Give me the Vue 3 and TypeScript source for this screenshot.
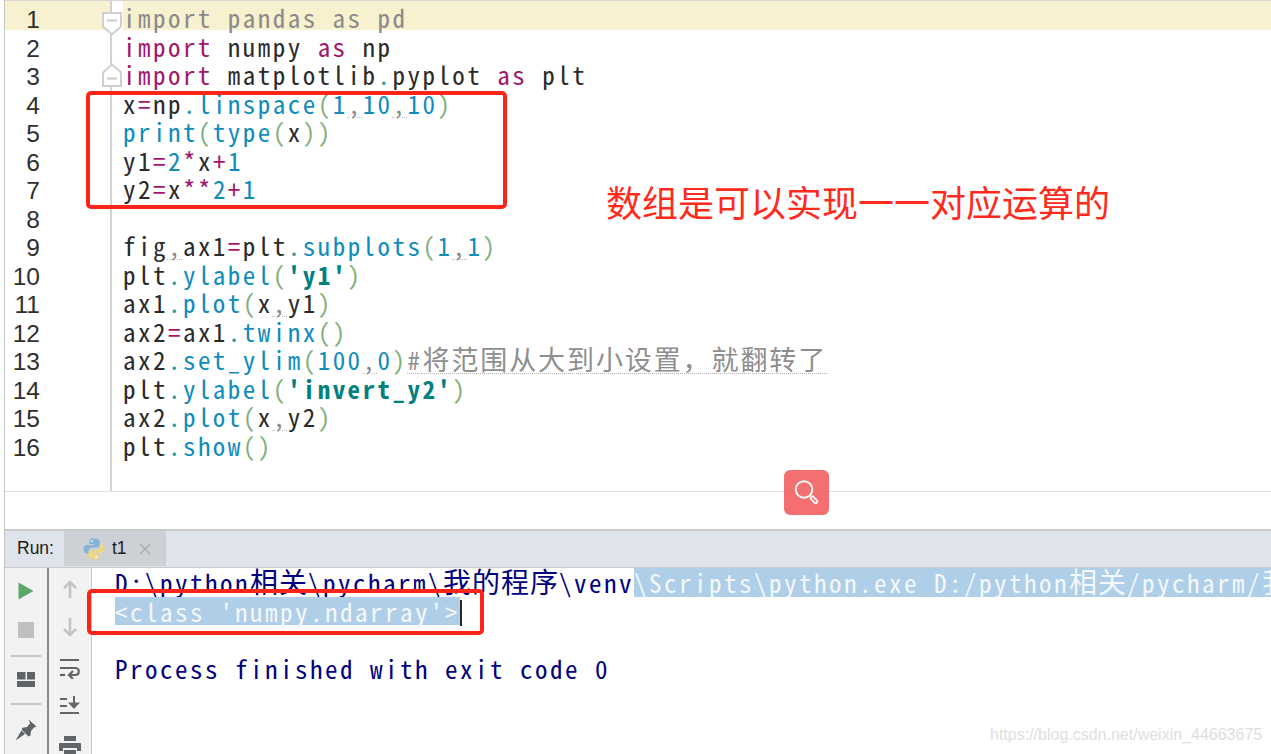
<script setup lang="ts">
type Tok = [string, string];
const p = (c: string): Tok => ['pa', c];
const lines: Tok[][] = [
  [['un', 'import pandas as pd']],
  [['kw', 'import'], ['id', ' numpy '], ['kw', 'as'], ['id', ' np']],
  [['kw', 'import'], ['id', ' matplotlib'], ['dot', '.'], ['id', 'pyplot '], ['kw', 'as'], ['id', ' plt']],
  [['id', 'x'], ['kw', '='], ['id', 'np'], ['dot', '.'], ['fn', 'linspace'], p('('), ['fn', '1'], ['cm', ','], ['fn', '10'], ['cm', ','], ['fn', '10'], p(')')],
  [['fn', 'print'], p('('), ['fn', 'type'], p('('), ['id', 'x'], p('))')],
  [['id', 'y1'], ['kw', '='], ['fn', '2'], ['kw', '*'], ['id', 'x'], ['kw', '+'], ['fn', '1']],
  [['id', 'y2'], ['kw', '='], ['id', 'x'], ['kw', '**'], ['fn', '2'], ['kw', '+'], ['fn', '1']],
  [],
  [['id', 'fig'], ['cm', ','], ['id', 'ax1'], ['kw', '='], ['id', 'plt'], ['dot', '.'], ['fn', 'subplots'], p('('), ['fn', '1'], ['cm', ','], ['fn', '1'], p(')')],
  [['id', 'plt'], ['dot', '.'], ['fn', 'ylabel'], p('('), ['st', "'y1'"], p(')')],
  [['id', 'ax1'], ['dot', '.'], ['fn', 'plot'], p('('), ['id', 'x'], ['cm', ','], ['id', 'y1'], p(')')],
  [['id', 'ax2'], ['kw', '='], ['id', 'ax1'], ['dot', '.'], ['fn', 'twinx'], p('()')],
  [['id', 'ax2'], ['dot', '.'], ['fn', 'set_ylim'], p('('), ['fn', '100'], ['cm', ','], ['fn', '0'], p(')'), ['note', '#'], ['zh', '将范围从大到小设置，就翻转了']],
  [['id', 'plt'], ['dot', '.'], ['fn', 'ylabel'], p('('), ['st', "'invert_y2'"], p(')')],
  [['id', 'ax2'], ['dot', '.'], ['fn', 'plot'], p('('), ['id', 'x'], ['cm', ','], ['id', 'y2'], p(')')],
  [['id', 'plt'], ['dot', '.'], ['fn', 'show'], p('()')],
];
</script>

<template>
  <div class="page">
    <section class="editor">
      <div class="numbers">
        <div v-for="(_, i) in lines" :key="i" class="num" :class="{ cur: i === 0 }">{{ i + 1 }}</div>
      </div>
      <div class="code">
        <div v-for="(l, i) in lines" :key="i" class="row" :class="{ cur: i === 0 }">
          <span v-for="(t, j) in l" :key="j" :class="t[0]">{{ t[1] }}</span>
        </div>
        <svg class="fold f1" width="20" height="24" viewBox="0 0 20 24">
          <path d="M1 1h18v13.5L10 22.5 1 14.5z" fill="#fff" stroke="#d0d0d0" stroke-width="2" />
          <path d="M5 8.5h10" stroke="#c8c8c8" stroke-width="2" />
        </svg>
        <svg class="fold f3" width="20" height="24" viewBox="0 0 20 24">
          <path d="M1 23h18V9.5L10 1.5 1 9.5z" fill="#fff" stroke="#d0d0d0" stroke-width="2" />
          <path d="M5 15.5h10" stroke="#c8c8c8" stroke-width="2" />
        </svg>
      </div>
    </section>
    <div class="gap"></div>

    <section class="run">
      <header class="tabs">
        <span class="run-label">Run:</span>
        <div class="tab">
          <svg width="22" height="22" viewBox="0 0 22 22">
            <path d="M10.8 0.5C6.5 0.5 6.3 2.2 6.3 3.6V6h4.8v1H3.8C1.8 7 .5 8.6.5 11.2s1.3 4.3 3.1 4.3h2v-2.6c0-1.9 1.6-3.4 3.5-3.4h4.8c1.6 0 2.8-1.3 2.8-2.9V3.6c0-1.6-1.5-3.1-5.9-3.1z" fill="#84b4d6" />
            <circle cx="8.7" cy="3" r="1" fill="#e6edf2" />
            <path d="M11.2 21.5c4.3 0 4.5-1.7 4.5-3.1V16h-4.8v-1h7.3c2 0 3.3-1.6 3.3-4.2s-1.3-4.3-3.1-4.3h-2v2.6c0 1.9-1.6 3.4-3.5 3.4H8.1c-1.6 0-2.8 1.3-2.8 2.9v2.5c0 1.6 1.5 3.1 5.9 3.1z" fill="#efd77f" />
            <circle cx="13.3" cy="19" r="1" fill="#fbf5dc" />
          </svg>
          <span class="tab-name">t1</span>
          <svg class="close" width="12" height="12" viewBox="0 0 12 12">
            <path d="M1 1l10 10M11 1L1 11" stroke="#a9adb1" stroke-width="1.4" />
          </svg>
        </div>
      </header>
      <div class="body">
        <div class="tools t-a">
          <svg class="play" width="16" height="18" viewBox="0 0 16 18"><path d="M0.5 0.5L15.5 9 0.5 17.5z" fill="#59a869" /></svg>
          <span class="stop"></span>
          <span class="sep s1"></span>
          <svg class="layout" width="18" height="15" viewBox="0 0 18 15">
            <path d="M0 0h8.5v7.5H0zM10 0h8v7.5h-8zM0 9h18v6H0z" fill="#5f6266" />
          </svg>
          <span class="sep s2"></span>
          <svg class="pin" width="22" height="22" viewBox="0 0 22 22">
            <path d="M13.5 0.5l8 7-2.5 1-3 3.5-.5 4.5-2 1-7-7 1.2-1.8 4.3-.7 3-3.5z" fill="#5f6266" />
            <path d="M6.5 11.5l3.5 3.5L0.5 21.5z" fill="#5f6266" />
          </svg>
        </div>
        <div class="tools t-b">
          <svg class="up" width="14" height="18" viewBox="0 0 14 18"><path d="M7 2V18M1 8l6-6 6 6" fill="none" stroke="#c4c4c4" stroke-width="2.6" /></svg>
          <svg class="down" width="14" height="19" viewBox="0 0 14 19"><path d="M7 0v17M1 11l6 6 6-6" fill="none" stroke="#c4c4c4" stroke-width="2.6" /></svg>
          <svg class="wrap" width="20" height="21" viewBox="0 0 20 21">
            <path d="M0 2h19M0 10h15c5 0 5 7 0 7H9" fill="none" stroke="#62666a" stroke-width="2.2" />
            <path d="M13 13l-4 4 4 4" fill="none" stroke="#62666a" stroke-width="2.2" />
            <path d="M0 17h5" stroke="#62666a" stroke-width="2.2" />
          </svg>
          <svg class="end" width="20" height="18" viewBox="0 0 20 18">
            <path d="M0 3h7M0 10h7M0 17h19M14 0v9" fill="none" stroke="#62666a" stroke-width="2" />
            <path d="M8 6.5h12L14 13z" fill="#62666a" />
          </svg>
          <svg class="print" width="22" height="20" viewBox="0 0 22 20">
            <path d="M5 0h12v5H5zM1 7h20c.6 0 1 .4 1 1v7h-4v-3H4v3H0V8c0-.6.4-1 1-1zM5 14h12v6H5z" fill="#62666a" />
          </svg>
        </div>
        <div class="console">
          <div class="cline">D:\python<span class="czh">相关</span>\pycharm\<span class="czh">我的程序</span>\venv<span class="sel">\Scripts\python.exe D:/python<span class="czh">相关</span>/pycharm/<span class="czh">我的程序</span>/t1.py</span></div>
          <div class="cline"><span class="sel">&lt;class 'numpy.ndarray'&gt;</span><span class="caret"></span></div>
          <div class="cline"></div>
          <div class="cline">Process finished with exit code 0</div>
        </div>
      </div>
    </section>

    <div class="mark box-a"></div>
    <div class="mark box-b"></div>
    <div class="note-red">数组是可以实现一一对应运算的</div>
    <div class="search">
      <svg width="30" height="30" viewBox="0 0 30 30" fill="none">
        <circle cx="12" cy="11.5" r="8.3" stroke="#fff" stroke-width="1.9" />
        <path d="M20.3 20l3.4 3.4" stroke="#fff" stroke-width="5" stroke-linecap="round" />
        <path d="M20.3 20l3.4 3.4" stroke="#f4706f" stroke-width="1.6" stroke-linecap="round" />
      </svg>
    </div>
    <div class="watermark">https://blog.csdn.net/weixin_44663675</div>
  </div>
</template>

<style>
html, body { margin: 0; background: #fff; }
</style>

<style scoped>
.page {
  position: relative;
  width: 1267px;
  height: 754px;
  margin-left: 4px;
  overflow: hidden;
  display: flex;
  flex-direction: column;
  background: #fff;
  box-sizing: border-box;
  border-left: 1px solid #c4c4c4;
  font-family: "Noto Sans CJK SC", "Liberation Mono", monospace;
  font-feature-settings: "hwid";
}
.editor {
  height: 490px;
  flex: none;
  display: flex;
  border-top: 1px solid #d6d6d6;
  border-bottom: 1px solid #e2e2e2;
}
.numbers {
  width: 105px;
  flex: none;
  font-family: "Liberation Sans", sans-serif;
  font-size: 24.5px;
  color: #2f2f2f;
}
.num {
  height: 28.5px;
  line-height: 37.5px;
  width: 105px;
  box-sizing: border-box;
  padding-right: 70px;
  text-align: right;
}
.num.cur, .row.cur { background: #f8f1cf; }
.code {
  position: relative;
  flex: 1;
  border-left: 2px solid #d2d2d2;
  font-size: 25px;
  letter-spacing: 2.47px;
  white-space: pre;
}
.row {
  height: 28.5px;
  line-height: 32.5px;
  padding-left: 11px;
}
.row.cur { margin-left: 11px; padding-left: 0; }
.un { color: #8a8a8a; }
.kw { color: #a3166e; }
.id { color: #2b2b2b; }
.fn { color: #0f8cbc; }
.pa { color: #7fb27a; }
.dot { color: #2d9a9a; }
.cm { color: #8a8a8a; text-decoration: underline dotted #b5b5b5 1px; text-underline-offset: 3px; }
.st { color: #00807f; font-weight: 700; }
.note { color: #8e8e8e; text-decoration: underline dotted #b5b5b5 1px; text-underline-offset: 3px; }
.zh {
  color: #8e8e8e;
  font-feature-settings: normal;
  font-size: 27px;
  letter-spacing: 1.9px;
  line-height: 0;
  text-decoration: underline dotted #b5b5b5 1px;
  text-underline-offset: 3px;
}
.fold { position: absolute; left: -10px; }
.f1 { top: 11px; }
.f3 { top: 62px; }
.gap { height: 37px; flex: none; }
.run {
  flex: 1;
  min-height: 0;
  display: flex;
  flex-direction: column;
  border-top: 2px solid #c9c9c9;
}
.tabs {
  height: 36px;
  flex: none;
  display: flex;
  background: #dfe3eb;
  border-bottom: 1px solid #c9c9c9;
  font-family: "Liberation Sans", sans-serif;
  font-feature-settings: normal;
}
.run-label {
  width: 59px;
  flex: none;
  box-sizing: border-box;
  padding-left: 12px;
  font-size: 17.5px;
  line-height: 35px;
  color: #1c1c1c;
}
.tab {
  width: 102px;
  height: 35px;
  background: #cdd0d4;
  display: flex;
  align-items: center;
  padding-left: 19px;
  box-sizing: border-box;
}
.tab-name { font-size: 17.5px; color: #1c1c1c; margin-left: 7px; }
.close { margin-left: 12px; }
.body { flex: 1; min-height: 0; display: flex; }
.tools {
  flex: none;
  display: flex;
  flex-direction: column;
  align-items: center;
  background: #f2f2f2;
  overflow: hidden;
}
.tools svg, .tools span { flex: none; display: block; }
.t-a { width: 42px; border-right: 2px solid #8c8c8c; padding-top: 14px; }
.t-b { width: 42px; border-right: 1px solid #c8c8c8; padding-top: 12px; }
.stop { width: 16px; height: 16px; background: #c0c0c0; margin-top: 22px; }
.sep { width: 30px; height: 2px; background: #c6c6c6; }
.s1 { margin-top: 17px; }
.layout { margin-top: 15px; }
.s2 { margin-top: 16px; }
.pin { margin-top: 14px; }
.down { margin-top: 20px; }
.wrap { margin-top: 21px; }
.end { margin-top: 17px; }
.print { margin-top: 22px; }
.console {
  flex: 1;
  min-width: 0;
  overflow: hidden;
  padding-left: 23px;
  color: #000080;
  font-size: 25px;
  letter-spacing: 2.5px;
  white-space: pre;
}
.cline { height: 28.5px; line-height: 29.5px; }
.czh {
  font-feature-settings: normal;
  font-size: 28px;
  letter-spacing: 1px;
  line-height: 0;
}
.sel {
  background: #afcee8;
  color: #f4f8fb;
  display: inline-block;
  height: 28.5px;
  vertical-align: top;
}
.caret {
  display: inline-block;
  width: 2px;
  height: 26px;
  background: #2a2a2a;
  vertical-align: top;
  margin-top: 3px;
}
.mark {
  position: absolute;
  border: 4px solid #ff2418;
  border-radius: 5px;
  box-sizing: border-box;
}
.box-a { left: 81px; top: 91px; width: 421px; height: 118px; }
.box-b { left: 82px; top: 589px; width: 397px; height: 46px; }
.note-red {
  position: absolute;
  left: 601px;
  top: 178px;
  font-family: "Noto Sans CJK SC", sans-serif;
  font-feature-settings: normal;
  font-size: 36px;
  line-height: 46px;
  color: #ff2a1c;
  white-space: nowrap;
}
.search {
  position: absolute;
  left: 779px;
  top: 470px;
  width: 45px;
  height: 45px;
  border-radius: 6px;
  background: rgba(243, 92, 92, 0.88);
  display: flex;
  align-items: center;
  justify-content: center;
}
.watermark {
  position: absolute;
  left: 985px;
  top: 726px;
  font-family: "Liberation Sans", sans-serif;
  font-feature-settings: normal;
  font-size: 16px;
  color: #dedede;
  white-space: nowrap;
}
</style>
